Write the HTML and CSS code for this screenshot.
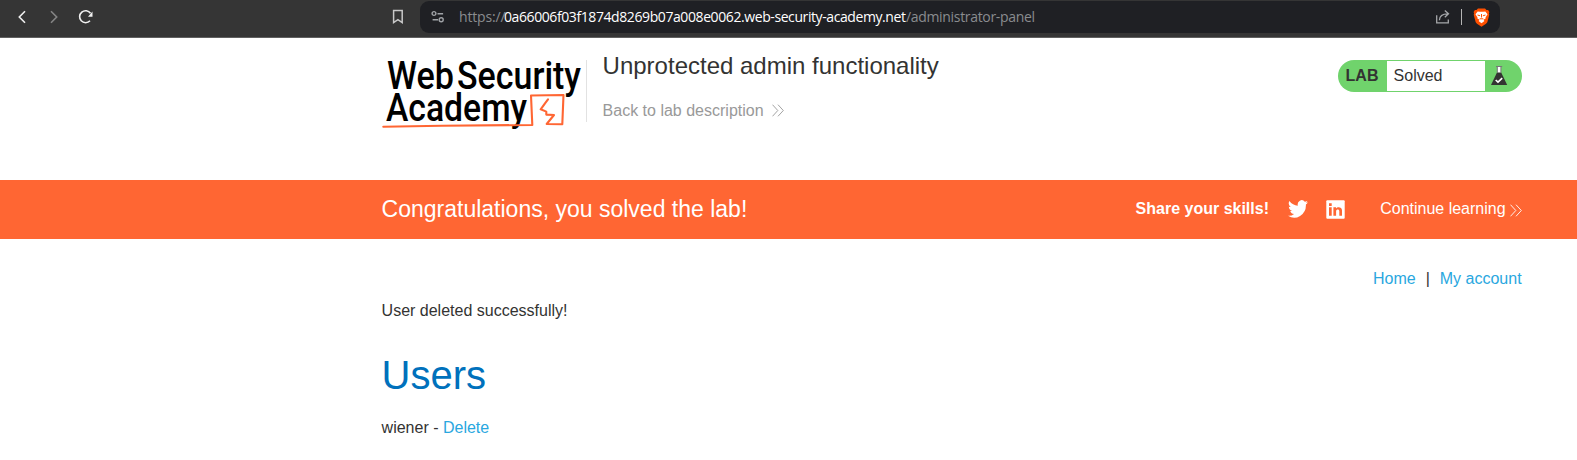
FILE: index.html
```html
<!DOCTYPE html>
<html lang="en">
<head>
<meta charset="utf-8">
<title>Unprotected admin functionality</title>
<link rel="stylesheet" href="styles.css">
</head>
<body>
<div class="toolbar">
  <svg class="nav" width="100" height="36" viewBox="0 0 100 36" fill="none" stroke-width="1.6">
    <path d="M25 11.2 19.3 17 25 22.8" stroke="#f0f0f0"/>
    <path d="M51 11.2 56.7 17 51 22.8" stroke="#858585"/>
    <path d="M90.500 13.200A6 6 0 1 0 90 20.800" stroke="#f0f0f0"/>
    <path d="M92.500 11.500v5.300h-4.500z" fill="#f0f0f0"/>
  </svg>
  <svg class="bookmark" width="12" height="16" viewBox="0 0 12 16" fill="none" stroke="#c8c8c8" stroke-width="1.5"><path d="M1.6 1.4h8.6v12.2L5.9 10.7 1.6 13.6z"/></svg>
  <div class="address">
    <svg class="tune" width="14" height="14" viewBox="0 0 14 14" fill="none" stroke="#a0a3a7" stroke-width="1.4"><circle cx="3" cy="3.5" r="1.9"/><path d="M6.5 3.7h5.6M1.6 9.8h5.4"/><circle cx="10.2" cy="9.8" r="2"/></svg>
    <div class="url"><span class="dim scheme">https://</span><span class="host">0a66006f03f1874d8269b07a008e0062.web-security-academy.net</span><span class="dim path">/administrator-panel</span></div>
    <svg class="share" width="16" height="16" viewBox="0 0 16 16" fill="none" stroke="#a5a7aa" stroke-width="1.3"><path d="M1.7 6.2v7.6h11.6v-3.2"/><path d="M4.4 11.2C4.5 7 7 4.8 12.8 4.8M9.8 1.4 13.5 4.8 9.8 8.3"/></svg>
    <span class="sep"></span>
    <svg class="brave" width="17" height="19" viewBox="0 0 17 19"><path fill="#ff5000" d="M5 .5h7l1.500 1.600 1.600-.1L16.400 4l-.5 1.600.4 1.200-2 7.400-1.300 1.600-4.500 2.900-4.500-2.900-1.300-1.600-2-7.400.4-1.200L.6 4 1.900 2l1.600.1z"/><path fill="#fff" d="M4.700 3.400 7 3.800h3l2.300-.4 2.200 2.900-2 3.200.1 1-2.200 1.300 1 1.200-2.900 2.200L5.600 13l1-1.200-2.200-1.300.1-1-2-3.200z"/><path d="m4.500 7 2.600.8M12.500 7l-2.600.8M8.500 6v3.500m-1.800 1.300h3.600" fill="none" stroke="#ff5000"/></svg>
  </div>
</div>
<header class="container header">
  <svg class="logo" width="205" height="74" viewBox="0 0 205 74">
    <g class="wordmark">
      <text x="5" y="30.500" textLength="67" lengthAdjust="spacingAndGlyphs">Web</text>
      <text x="75" y="30.500" textLength="124" lengthAdjust="spacingAndGlyphs">Security</text>
      <text x="4" y="63" textLength="141" lengthAdjust="spacingAndGlyphs">Academy</text>
    </g>
    <path d="M1.300 68.700 60 67.700 150.300 67 149 37.500l32.500-.5-1.200 29.300-15.600-.3 7.300-9-7.700-.4v-3l-5.600-2.300 4.300-6 3-4" fill="none" stroke="#ff6633" stroke-width="2.100" stroke-linejoin="round" stroke-linecap="round"/>
  </svg>
  <div class="heading">
    <h2>Unprotected admin functionality</h2>
    <a class="back">Back to lab description<svg class="chev" width="12" height="13" viewBox="0 0 12 13"><path d="m.5.7 5.300 5.800-5.300 5.800M6 .7l5.300 5.800L6 12.300"/></svg></a>
  </div>
  <div class="lab"><b>LAB</b><span class="status">Solved</span>
    <svg width="18" height="22" viewBox="0 0 18 22"><path d="M7.300 2h3.600v6H7.300z" fill="#fff"/><path d="M6 1.500h6.200M7.300 2v5.500M10.900 2v5.500" stroke="#777" fill="none"/><path d="M7 7.500h4.200L17.200 20H1z" fill="#333332"/><path d="m5.700 15 2.300 2.200 4.200-4" fill="none" stroke="#fff" stroke-width="1.600"/></svg>
  </div>
</header>
<section class="banner">
  <div class="container notice">
    <h4>Congratulations, you solved the lab!</h4>
    <b class="skills">Share your skills!</b>
    <svg class="twitter" width="20" height="18" viewBox="0 2 24 20" preserveAspectRatio="none"><path fill="#fff" d="M24 4.600a10 10 0 0 1-2.800.8 5 5 0 0 0 2.100-2.700 10 10 0 0 1-3.100 1.200 4.900 4.900 0 0 0-8.400 4.500A14 14 0 0 1 1.700 3.200a4.900 4.900 0 0 0 1.500 6.500 5 5 0 0 1-2.200-.6 4.900 4.900 0 0 0 3.900 4.900 5 5 0 0 1-2.200.1 4.900 4.900 0 0 0 4.600 3.400A10 10 0 0 1 0 19.500a14 14 0 0 0 21.500-12.400A10 10 0 0 0 24 4.600z"/></svg>
    <svg class="linkedin" width="19" height="19" viewBox="0 0 19 19"><rect x=".3" y=".3" width="18.400" height="18.400" rx="1" fill="#fff"/><path fill="#f63" d="M3 7.300h2.700v8.500H3zM3 3.300h2.700v2.600H3zM7.400 7.300H10v1.200c1.400-2.200 6-1.900 6 2v5.300h-2.700V11c0-2.300-3.200-2-3.200 0v4.800H7.400z"/></svg>
    <a class="continue">Continue learning<svg class="chev" width="12" height="13" viewBox="0 0 12 13"><path d="m.5.7 5.300 5.800-5.300 5.800M6 .7l5.300 5.800L6 12.300"/></svg></a>
  </div>
</section>
<main class="container">
  <nav class="links"><a>Home</a><span>|</span><a>My account</a></nav>
  <p class="message">User deleted successfully!</p>
  <h1>Users</h1>
  <p class="user">wiener - <a>Delete</a></p>
</main>
</body>
</html>
```
FILE: styles.css
```css
* { box-sizing: border-box; }
body { margin: 0; background: #fff; color: #333332; font: 16px/20px "Liberation Sans", Arial, sans-serif; overflow: hidden; }
h1, h2, h4, p { margin: 0; font-weight: 400; }
svg { display: block; flex: none; }
.toolbar { height: 38px; background: #353535; border-bottom: 1px solid #606060; display: flex; align-items: flex-start; }
.bookmark { margin: 9px 0 0 292px; }
.address { margin: 1px 0 0 16px; width: 1080px; height: 32px; border-radius: 9px; background: #1f2024; display: flex; align-items: center; }
.tune { margin-left: 11px; }
.url { margin-left: 14px; width: 976px; display: flex; color: #fff; font: 14px/20px "Open Sans", "Noto Sans", sans-serif; white-space: nowrap; }
.dim { color: #8a8c8f; }
.scheme { width: 45px; letter-spacing: -0.15px; }
.host { width: 402px; letter-spacing: -0.41px; }
.path { letter-spacing: -0.33px; }
.sep { width: 1px; height: 16px; margin: 0 11px 0 10px; background: #b5b5b5; }
.container { width: 1140px; margin-left: 381.6px; }
.header { height: 142px; display: flex; align-items: flex-start; padding-top: 20px; }
.logo { width: 205px; height: 74px; overflow: visible; }
.wordmark { font: 500 38px Roboto, sans-serif; fill: #000; }
.heading { margin-top: 2px; padding-left: 16px; border-left: 1px solid #e2e2e2; height: 62px; width: 400px; margin-left: -1px; }
h2 { font-size: 24px; line-height: 28px; margin-top: -8px; }
.back { display: flex; align-items: center; margin-top: 21px; color: #999; }
.back .chev { margin: -2px 0 0 8px; }
.chev path { fill: none; stroke: currentColor; stroke-width: .9; }
.lab { margin: 2px 0 0 auto; width: 184px; height: 32px; border-radius: 16px; background: #70d36c; display: flex; align-items: center; }
.lab b { width: 49px; padding-left: 8px; }
.status { width: 98px; height: 30px; background: #fff; padding-left: 7px; line-height: 29px; }
.lab svg { margin-left: 5px; }
.banner { height: 59px; background: #f63; color: #fff; }
.notice { height: 58px; display: flex; align-items: center; }
h4 { font-size: 23px; line-height: 28px; width: 754px; }
.skills { width: 152px; }
.linkedin { margin-left: 18px; }
.continue { margin-left: auto; display: flex; align-items: center; }
.continue .chev { margin: 2px 0 0 4px; }
.links { display: flex; justify-content: flex-end; padding-top: 30px; }
.links span { margin: 0 10px; }
main a { color: #29a7e0; }
.message { margin-top: 12px; }
h1 { color: #0071bc; font-size: 40px; line-height: 46px; margin-top: 31px; }
.user { margin-top: 20px; }
```
